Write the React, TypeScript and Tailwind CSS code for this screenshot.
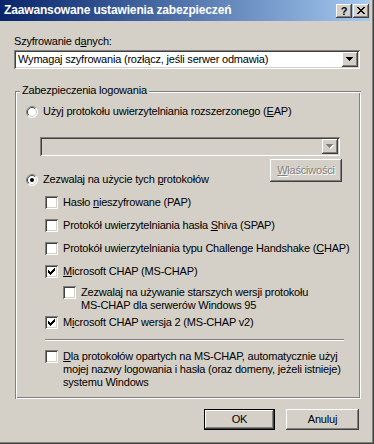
import type { ReactNode } from "react";

const RAISED =
  "shadow-[inset_-1px_-1px_#404040,inset_1px_1px_#ffffff,inset_-2px_-2px_#808080,inset_2px_2px_#d4d0c8]";
const SUNKEN =
  "shadow-[inset_1px_1px_#808080,inset_-1px_-1px_#ffffff,inset_2px_2px_#404040,inset_-2px_-2px_#d4d0c8]";

// classic check mark, one 3px column per x
const CHECK_COLS = [
  [3, 5],
  [4, 6],
  [5, 7],
  [6, 6],
  [7, 5],
  [8, 4],
  [9, 3],
];

const ARROW_ROWS = [
  [0, 7],
  [1, 5],
  [2, 3],
  [3, 1],
];

const CLOSE_PIXELS = [
  [0, 0], [1, 0], [6, 0], [7, 0],
  [1, 1], [2, 1], [5, 1], [6, 1],
  [2, 2], [3, 2], [4, 2], [5, 2],
  [3, 3], [4, 3],
  [2, 4], [3, 4], [4, 4], [5, 4],
  [1, 5], [2, 5], [5, 5], [6, 5],
  [0, 6], [1, 6], [6, 6], [7, 6],
];

function CheckBox({ checked }: { checked?: boolean }) {
  return (
    <span className={`block w-[13px] h-[13px] shrink-0 bg-white ${SUNKEN}`}>
      {checked && (
        <svg width="13" height="13" viewBox="0 0 13 13" shapeRendering="crispEdges" className="block">
          {CHECK_COLS.map(([x, y]) => (
            <rect key={x} x={x} y={y} width="1" height="3" fill="#000" />
          ))}
        </svg>
      )}
    </span>
  );
}

function Radio({ checked }: { checked?: boolean }) {
  return (
    <svg width="12" height="12" viewBox="0 0 12 12" className="block shrink-0">
      <circle cx="6" cy="6" r="5.5" fill="#ffffff" />
      <path d="M2.1 9.9 A5.5 5.5 0 0 1 9.9 2.1" stroke="#808080" fill="none" />
      <path d="M9.9 2.1 A5.5 5.5 0 0 1 2.1 9.9" stroke="#ffffff" fill="none" />
      <path d="M2.8 9.2 A4.5 4.5 0 0 1 9.2 2.8" stroke="#404040" fill="none" />
      <path d="M9.2 2.8 A4.5 4.5 0 0 1 2.8 9.2" stroke="#d4d0c8" fill="none" />
      {checked && <circle cx="6" cy="6" r="2" fill="#000" />}
    </svg>
  );
}

function Arrow({ disabled }: { disabled?: boolean }) {
  return (
    <svg width="8" height="5" viewBox="0 0 8 5" shapeRendering="crispEdges" className="block">
      {disabled &&
        ARROW_ROWS.map(([y, w]) => (
          <rect key={`s${y}`} x={(7 - w) / 2 + 1} y={y + 1} width={w} height="1" fill="#ffffff" />
        ))}
      {ARROW_ROWS.map(([y, w]) => (
        <rect key={y} x={(7 - w) / 2} y={y} width={w} height="1" fill={disabled ? "#808080" : "#000"} />
      ))}
    </svg>
  );
}

function Combo({ text, disabled, className }: { text?: string; disabled?: boolean; className: string }) {
  return (
    <div className={`flex items-center p-[2px] ${disabled ? "bg-[#d4d0c8]" : "bg-white"} ${SUNKEN} ${className}`}>
      <span className="flex-1 pl-[2px] truncate">{text}</span>
      <span className={`flex items-center justify-center w-[16px] h-full bg-[#d4d0c8] ${RAISED}`}>
        <Arrow disabled={disabled} />
      </span>
    </div>
  );
}

function U({ children }: { children: ReactNode }) {
  return <span className="underline underline-offset-[1px]">{children}</span>;
}

function CheckRow({ checked, children, className = "" }: { checked?: boolean; children: ReactNode; className?: string }) {
  return (
    <div className={`flex items-start gap-[5px] ml-[30px] ${className}`}>
      <CheckBox checked={checked} />
      <span>{children}</span>
    </div>
  );
}

export default function App() {
  return (
    <div className="w-[374px] h-[444px] bg-[#d4d0c8] flex flex-col text-black text-[11px] leading-[13px] tracking-[-0.2px] font-['Liberation_Sans',Arial,sans-serif] shadow-[inset_-1px_-1px_#404040,inset_-2px_-2px_#808080] overflow-hidden">
      {/* Title bar */}
      <div className="w-[370px] h-[21px] shrink-0 flex items-center pl-[4px] pr-[1px] bg-gradient-to-r from-[#0a246a] to-[#a6caf0]">
        <span className="flex-1 text-white font-bold text-[12px] tracking-[-0.15px]">
          Zaawansowane ustawienia zabezpieczeń
        </span>
        <div className="flex gap-[1px]">
          <span className={`flex items-center justify-center w-[16px] h-[14px] bg-[#d4d0c8] font-bold text-[11px] leading-none pt-[1px] ${RAISED}`}>
            ?
          </span>
          <span className={`flex items-center justify-center w-[16px] h-[14px] bg-[#d4d0c8] ${RAISED}`}>
            <svg width="8" height="7" viewBox="0 0 8 7" shapeRendering="crispEdges" className="block">
              {CLOSE_PIXELS.map(([x, y]) => (
                <rect key={`${x}-${y}`} x={x} y={y} width="1" height="1" fill="#000" />
              ))}
            </svg>
          </span>
        </div>
      </div>

      {/* Encryption */}
      <div className="ml-[14px] mt-[14px]">
        Szyfrowanie d<U>a</U>nych:
      </div>
      <Combo
        className="ml-[14px] mt-[2px] w-[346px] h-[19px]"
        text="Wymagaj szyfrowania (rozłącz, jeśli serwer odmawia)"
      />

      {/* Logon security group */}
      <div className="relative ml-[15px] mt-[22px] w-[346px] pb-[10px] flex flex-col shadow-[inset_1px_1px_#808080,inset_-1px_-1px_#ffffff,inset_2px_2px_#ffffff,inset_-2px_-2px_#808080]">
        <span className="absolute left-[5px] top-[-7px] px-[2px] bg-[#d4d0c8]">Zabezpieczenia logowania</span>

        <div className="flex items-center gap-[5px] ml-[11px] mt-[14px] h-[13px]">
          <Radio />
          <span>
            Użyj protokołu uwierzytelniania rozszerzonego (<U>E</U>AP)
          </span>
        </div>

        <Combo disabled className="ml-[25px] mt-[19px] w-[300px] h-[19px]" />

        <div className="flex items-start mt-[3px]">
          <div className="flex items-center gap-[5px] ml-[11px] mt-[14px] h-[13px] w-[244px]">
            <Radio checked />
            <span>
              Zezwalaj na użycie tych <U>p</U>rotokołów
            </span>
          </div>
          <button
            className={`w-[72px] h-[23px] bg-[#d4d0c8] text-[#808080] [text-shadow:1px_1px_0_#ffffff] ${RAISED}`}
          >
            <U>W</U>łaściwości
          </button>
        </div>

        <CheckRow className="mt-[10px]">
          Hasło <U>n</U>ieszyfrowane (PAP)
        </CheckRow>
        <CheckRow className="mt-[10px]">
          Protokół uwierzytelniania hasła <U>S</U>hiva (SPAP)
        </CheckRow>
        <CheckRow className="mt-[10px]">
          Protokół uwierzytelniania typu Challenge Handshake (<U>C</U>HAP)
        </CheckRow>
        <CheckRow checked className="mt-[10px]">
          <U>M</U>icrosoft CHAP (MS-CHAP)
        </CheckRow>

        <div className="flex items-start gap-[5px] ml-[48px] mt-[8px]">
          <CheckBox />
          <span>
            Zezwalaj na używanie starszych wersji protokołu
            <br />
            MS-CHAP dla serwerów Windows 95
          </span>
        </div>

        <CheckRow checked className="mt-[4px]">
          M<U>i</U>crosoft CHAP wersja 2 (MS-CHAP v2)
        </CheckRow>

        <div className="ml-[30px] mt-[10px] w-[299px] h-[2px] border-t border-[#808080] border-b border-b-white" />

        <CheckRow className="mt-[9px]">
          <U>D</U>la protokołów opartych na MS-CHAP, automatycznie użyj
          <br />
          mojej nazwy logowania i hasła (oraz domeny, jeżeli istnieje)
          <br />
          systemu Windows
        </CheckRow>
      </div>

      {/* Dialog buttons */}
      <div className="flex justify-end gap-[11px] mt-[10px] w-[370px] pr-[11px]">
        <button
          className="w-[71px] h-[21px] bg-[#d4d0c8] shadow-[inset_0_0_0_1px_#000000,inset_-2px_-2px_#404040,inset_2px_2px_#ffffff,inset_-3px_-3px_#808080,inset_3px_3px_#d4d0c8]"
        >
          OK
        </button>
        <button className={`w-[73px] h-[21px] bg-[#d4d0c8] ${RAISED}`}>Anuluj</button>
      </div>
    </div>
  );
}
